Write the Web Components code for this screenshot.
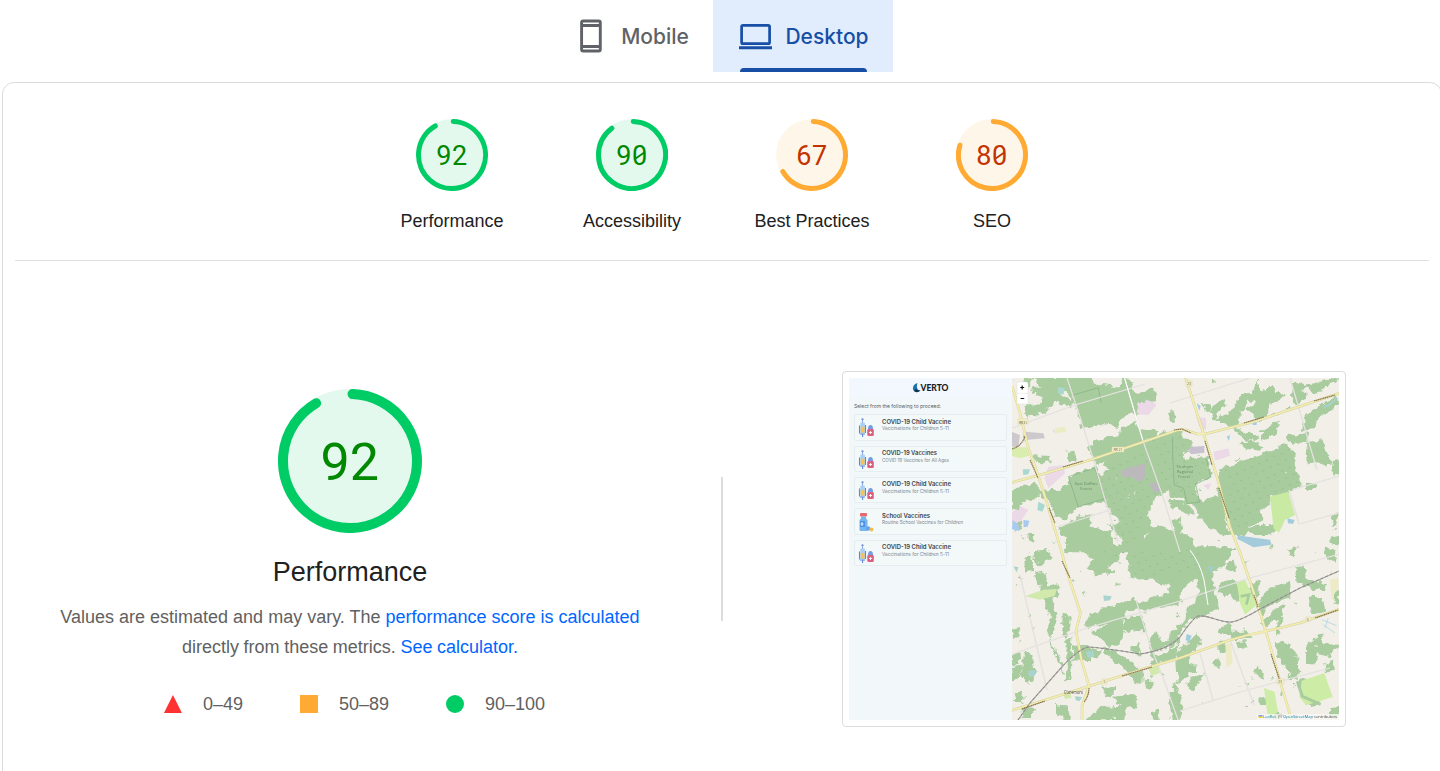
<!DOCTYPE html>
<html lang="en">
<head>
<meta charset="utf-8">
<title>PageSpeed report</title>
<style>
html,body{margin:0;height:100%;overflow:hidden;background:#fff;font-family:"Liberation Sans",Arial,sans-serif}
</style>
</head>
<body>
<report-page></report-page>
<script>
const define = (name, html, setup) => customElements.define(name, class extends HTMLElement {
  connectedCallback() {
    if (this.shadowRoot) return;
    const root = this.attachShadow({mode: 'open'});
    const t = document.createElement('template');
    t.innerHTML = typeof html === 'function' ? html(this) : html;
    root.append(t.content.cloneNode(true));
    if (setup) setup(this, root);
  }
});

define('device-tab', `<style>
:host{display:flex;box-sizing:border-box;height:72px;align-items:center;justify-content:center;position:relative;color:#5f6368;font:500 21px/28px Inter,"Open Sans",sans-serif}
:host([active]){background:#e1edfc;color:#174ea6}
:host([active])::after{content:"";position:absolute;left:27px;right:26px;bottom:0;height:4px;border-radius:4px 4px 0 0;background:#174ea6}
.icon{display:flex;width:36px;height:36px;margin-right:12px}
.label{white-space:nowrap;padding-top:1px}
</style><span class="icon"><slot name="icon"></slot></span><span class="label"><slot></slot></span>`);

// Circular score gauge; angles run clockwise from twelve o'clock.
define('score-gauge', el => {
  const size = +el.getAttribute('size'), sw = +el.getAttribute('stroke'), end = +el.getAttribute('end');
  const c = size / 2, r = c - sw / 2, start = sw / 2 / r * 180 / Math.PI * .5;
  const pt = a => { a = a * Math.PI / 180; return (c + r * Math.sin(a)).toFixed(2) + ' ' + (c - r * Math.cos(a)).toFixed(2); };
  const pass = el.hasAttribute('pass');
  const [bg, line, ink] = pass ? ['#e4f9ee', '#0c6', '#080'] : ['#fff6ea', '#fa3', '#c33300'];
  const fs = +el.getAttribute('font'), score = el.getAttribute('score');
  const small = size < 100;
  const pitch = small ? 15.9 : 29.2, y = c + fs * .357 + (small ? .5 : 0);
  const slash = score[1] === '0' ? `<path d="M${c + pitch / 2 - 4.3} ${c + 3.6}L${c + pitch / 2 + 4.3} ${c - 2.6}" stroke="${ink}" stroke-width="1.8"/>` : '';
  return `<style>:host{display:block;width:${size}px;height:${size}px}svg{display:block}text{font-family:Roboto,sans-serif;font-size:${fs}px;text-anchor:middle}</style>
  <svg width="${size}" height="${size}" viewBox="0 0 ${size} ${size}">
  <circle cx="${c}" cy="${c}" r="${c}" fill="${bg}"/>
  <path d="M${pt(start)}A${r} ${r} 0 1 1 ${pt(end)}" fill="none" stroke="${line}" stroke-width="${sw}" stroke-linecap="round"/>
  <text x="${c - pitch / 2 - .3}" y="${y}" fill="${ink}">${score[0]}</text><text x="${c + pitch / 2 - .3}" y="${y}" fill="${ink}">${score[1]}</text>${slash}</svg>`;
});

define('category-score', el => `<style>
:host{display:flex;flex-direction:column;align-items:center;width:180px;color:#212121;font-size:18px;line-height:24px}
span{margin-top:18px}
</style><score-gauge size="72" stroke="5" font="27" score="${el.getAttribute('score')}" end="${el.getAttribute('end')}" ${el.hasAttribute('pass') ? 'pass' : ''}></score-gauge><span><slot></slot></span>`);

define('legend-item', `<style>
:host{display:flex;align-items:center;gap:21px;color:#616161;font-size:18px;line-height:24px}
i{display:block;width:18px;height:18px}
:host([kind=fail]) i{background:#f33;clip-path:polygon(50% 0,100% 100%,0 100%)}
:host([kind=average]) i{background:#fa3}
:host([kind=pass]) i{background:#0c6;border-radius:50%}
</style><i></i><span><slot></slot></span>`);

define('fit-text', el => {
  const w = el.getAttribute('w'), f = +el.getAttribute('size');
  return `<style>:host{display:block;height:${f * 1.25}px}svg{display:block;overflow:visible}text{font-family:Inter,sans-serif;font-weight:${el.getAttribute('weight') || 400};font-size:${f}px;fill:${el.getAttribute('ink')}}</style>
  <svg width="${w}" height="${f * 1.25}"><text x="0" y="${f}" textLength="${w}" lengthAdjust="spacingAndGlyphs">${el.getAttribute('text')}</text></svg>`;
});

define('vaccine-icon', el => `<style>:host{display:block;width:17px;height:20px}svg{display:block}</style>` + (el.getAttribute('kind') === 'bottle'
 ? `<svg width="17" height="20" viewBox="0 0 17 20"><rect x="2" y="1" width="7" height="3.5" rx="1" fill="#e6676c"/><path d="M3 4.500h5v2l1.500 1.500v10q0 1-1 1h-6q-1 0-1-1v-10L3 6.500z" fill="#77b5ee"/><rect x="2" y="9" width="5" height="6" fill="#4d91e3"/><path d="M4 10v4M2.500 12h3" stroke="#e4f3fd"/><circle cx="10" cy="16.500" r="2.300" fill="#61a6ef"/><circle cx="13.500" cy="17.500" r="2" fill="#f1bd56"/></svg>`
 : `<svg width="17" height="20" viewBox="0 0 17 20"><path d="M4.500 0v5M3 1.300h3" stroke="#7f98d8" stroke-width=".9"/><rect x="2.300" y="4.500" width="4.600" height="11" rx="1" fill="#a9cff3"/><rect x="2.800" y="9" width="3.700" height="5.500" fill="#f6c253"/><path d="M1.500 7.500v8M7.500 7v8M2 16h5M4.600 16v3" stroke="#5f88da" stroke-width="1.100"/><path d="M10 11q0-4 2.500-4T15 11z" fill="#759be3"/><rect x="9.300" y="11" width="6.500" height="7" rx="1.300" fill="#dc607f"/><path d="M12.500 13v3M11 14.500h3" stroke="#fff" stroke-width=".9"/></svg>`));

define('vaccine-card', el => `<style>
:host{display:flex;box-sizing:border-box;height:26.4px;border:1px solid #e6edf0;border-radius:2px;background:#f3f8f9;padding:3px 0 0 3px;gap:7px}
fit-text:first-child{margin-top:-.7px}
fit-text+fit-text{margin-top:.3px}
</style><vaccine-icon kind="${el.getAttribute('icon')}"></vaccine-icon><div>
<fit-text text="${el.getAttribute('name')}" w="${el.getAttribute('nw')}" size="5.900" weight="600" ink="#3b444b"></fit-text>
<fit-text text="${el.getAttribute('note')}" w="${el.getAttribute('tw')}" size="4.600" ink="#7b858b"></fit-text></div>`);

// Region map. The four land groups share a scale of three units per pixel.
define('region-map', () => {
  const q = (x, y, s) => `<g transform="translate(${x} ${y}) scale(.33333)">${s}</g>`;
  const poly = list => list.trim().split('\n').map(p => `<polygon points="${p.trim()}"/>`).join('');
  const nw = poly(`75,24 165,22 160,50 145,75 190,90 188,112 135,95 105,128 50,138 45,110 88,102 98,80 60,60 98,50
  165,22 240,22 250,42 330,55 340,22 352,22 380,75 425,58 442,68 438,92 385,95 378,130 350,128 330,150 325,168 280,160 215,172 203,120 188,78 160,62
  40,24 58,24 62,45 48,48
  245,222 285,202 328,198 332,178 375,155 382,180 440,182 440,200 340,220 300,238 246,255 236,232
  248,250 330,222 400,205 420,245 430,300 465,365 430,388 412,430 425,475 400,495 400,545 332,545 335,505 305,470 335,450 308,435 290,400 260,318 300,300 285,275 262,288
  175,320 255,292 290,388 205,410
  410,215 490,188 512,180 512,362 462,362 442,330 425,285
  90,362 140,358 180,345 205,410 160,448 140,440 125,395 100,385
  5,360 80,340 92,368 70,390 35,390 30,412 5,415
  145,475 205,445 242,435 235,470 270,478 298,490 310,525 335,545 165,545 170,510
  418,475 450,472 500,490 490,455 512,440 512,545 390,545 405,510
  175,248 192,244 198,270 178,272
  78,258 118,260 120,275 84,280
  55,492 74,496 70,512 54,508
  440,200 465,182 476,202 510,185 510,210 448,220
  18,480 35,470 30,455 12,460`);
  const ne = poly(`0,190 28,192 40,208 60,214 68,230 40,245 45,272 110,262 125,320 82,335 76,350 92,395 70,405 50,400 40,382 0,375
  150,298 310,245 345,222 372,248 390,348 345,368 298,378 300,402 265,420 280,450 240,468 220,496 188,492 170,440 145,370
  75,400 150,380 165,450 180,492 150,495 130,475 90,445
  0,385 45,400 72,428 55,438 40,420 0,412
  0,480 60,500 75,545 0,545
  125,125 132,102 162,88 165,110 130,130 140,152 198,112 210,75 262,68 268,84 232,92 225,118 210,120 200,165 180,172 160,150 132,152
  238,80 265,35 270,75 300,85 290,140 268,158 235,115 260,100
  270,65 308,48 316,68 310,82 280,92
  290,85 328,70 340,80 305,96
  368,42 398,40 395,62 408,72 400,92 378,100 365,78
  392,48 440,40 430,54
  425,58 455,32 490,24 505,30 470,44 450,62 430,70
  405,145 425,120 475,98 500,82 502,98 470,130 438,148 435,175 398,180
  0,120 15,132 12,150 0,150
  195,175 225,192 252,188 265,205 225,210
  210,220 250,215 278,228 268,240 230,235
  275,185 330,150 320,185 295,205 275,212
  410,220 455,208 468,250 485,268 482,290 445,275 415,280
  490,272 506,270 506,310 488,318
  408,340 435,342 435,352 410,352
  100,110 120,102 122,120 105,122
  170,370 235,355 235,380 190,400
  482,505 506,500 506,526 486,526
  230,475 285,465 330,475 300,490 240,490
  350,200 415,190 410,210 368,225
  485,434 500,430 500,460 490,462`);
  const sw = poly(`75,12 112,5 120,30 88,52 72,34
  45,35 62,25 68,70 48,75
  220,0 350,0 365,90 420,88 455,112 510,92 510,0
  220,0 330,0 325,38 290,60 310,70 260,82 232,60 250,38
  90,120 140,108 146,132 125,160 138,200 122,270 112,245 125,205
  75,80 102,76 110,115 85,112
  160,200 172,198 180,230 168,270 158,235
  228,230 238,205 290,182 370,155 400,175 345,188 345,210 230,240
  250,250 328,212 342,240 330,288 300,295 270,270
  340,210 392,205 410,248 345,245
  375,172 425,150 510,130 510,165 400,188
  195,298 225,295 270,310 262,328 235,338 192,335
  275,305 295,300 360,340 400,380 398,402 375,400 340,358
  5,325 30,315 32,335 10,350
  35,355 52,310 68,330 75,375 58,405 38,388
  5,360 30,352 32,385 8,395
  422,275 435,255 458,285 490,270 506,245 508,280 435,310 445,350 425,345
  362,298 388,290 392,320 368,318
  280,422 310,416 310,435 288,440
  230,515 270,480 335,475 310,445 372,440 385,470 350,480 340,515
  405,402 425,400 425,420 410,422
  10,435 40,428 38,460 15,460
  35,480 70,485 65,508 40,508
  140,470 170,475 180,515 140,500
  8,245 25,240 28,265 12,268
  430,325 470,315 505,290 495,330 435,345
  175,350 165,290 185,270 185,350 170,402
  120,280 150,330 160,380 150,345
  425,495 445,490 450,512 430,512
  485,415 500,410 495,440`);
  const se = poly(`0,0 195,0 160,48 130,68 125,100 85,90 60,100 35,120 20,165 0,170
  85,80 128,100 145,180 90,205 55,215 0,300 0,255 40,225 60,170 88,150
  150,105 190,95 208,120 205,155 170,140 148,135
  172,42 195,38 195,72 172,65
  355,5 382,0 370,22
  465,0 490,10 495,42 475,30
  380,60 402,55 405,90 465,110 460,130 385,105
  240,105 268,98 262,145 250,155
  295,125 355,105 360,145 300,170 270,205 260,175
  415,148 455,150 465,190 425,198
  495,128 505,125 505,168 492,165
  275,225 320,180 342,172 328,240 320,265 322,210 285,240
  320,280 345,285 380,318 385,390 365,388 325,320
  410,298 455,260 458,290 505,292 480,325 440,315 435,345 410,340
  465,348 490,338 492,362 470,375
  480,482 505,480 500,510 478,505
  20,320 80,260 92,285 65,315 50,390 25,405
  60,395 105,378 85,400 72,425 55,420
  145,240 180,228 182,250 225,250 250,270 195,275 180,258 150,260
  145,285 162,280 165,305 148,310
  132,345 150,330 150,360 135,360
  200,285 225,282 230,300 205,302
  260,360 282,375 280,395 262,385
  270,450 290,455 285,470 272,468
  0,435 20,430 40,470 30,510 10,515
  60,345 72,350 70,372 55,370
  380,405 400,390 420,450 450,460 425,475 395,440
  305,495 325,490 328,512 310,512`);
  let seed = 7;
  const rnd = () => (seed = seed * 16807 % 2147483647) / 2147483647;
  let specks = '', holes = '';
  for (let i = 0; i < 150; i++) {
    const x = 1012 + rnd() * 327, y = 378 + rnd() * 342, w = .8 + rnd() * 2.6, h = .7 + rnd() * 2;
    const s = `<rect x="${x.toFixed(1)}" y="${y.toFixed(1)}" width="${w.toFixed(1)}" height="${h.toFixed(1)}" transform="rotate(${(rnd() * 70 - 35) | 0} ${x | 0} ${y | 0})"/>`;
    if (i % 3) specks += s; else holes += s;
  }
  const major = ['1012 386 1020 413 1028 447 1038 475 1047 503 1061 550 1069 578 1080.5 613 1076 631 1081.7 661 1089 686 1082 706 1082 720',
   '1010 483 1040 475 1090 460 1143 442 1178 430 1186 430 1197 434 1205 434 1253 422 1313 402 1340 393',
   '1185 376 1203 432 1217 477 1230 527 1239 550 1250 581 1267 635 1280 681 1292 721',
   '1010 711 1077 690 1140 670 1180 658 1230 640 1248 635 1267 631 1300 623 1340 609'];
  const lines = (a, c, w) => a.map(p => `<polyline points="${p}" stroke="${c}" stroke-width="${w}"/>`).join('');
  const minor = ['1010 655 1087 628 1180 601 1250 578 1340 554', '1067 378 1080 417 1093 458 1106 503 1118 542', '1124 376 1143 441 1163 497 1180 552',
   '1136 600 1150 645 1164 680 1178 720', '1012 428 1075 405 1145 384', '1057 527 1110 510', '1020 575 1047 690', '1170 403 1250 378',
   '1289 490 1299 524 1339 513', '1200 653 1213 700', '1180 711 1240 692 1330 668', '1290 378 1317 470', '1339 476 1292 490', '1230 640 1254 705'];
  const rail = 'M1018 720L1030 703 1060 669Q1077 650 1088 647Q1105 648 1140 654Q1168 650 1180 637Q1193 618 1198 616C1210 615 1220 623 1232 622Q1242 620 1260 609L1300 588 1339 571';
  return `<style>:host{display:block;width:327px;height:342px;overflow:hidden}svg{display:block}text{font-family:"Open Sans",sans-serif}</style>
  <svg width="327" height="342" viewBox="1012 378 327 342">
  <defs><pattern id="tree" width="12" height="11" patternUnits="userSpaceOnUse" patternTransform="rotate(18)"><path d="M2 3l1-1 1 1M8 8l1-1 1 1" stroke="#93bd8b" stroke-width=".9" fill="none"/></pattern>
  <filter id="rough" x="1000" y="370" width="350" height="360" filterUnits="userSpaceOnUse" color-interpolation-filters="sRGB"><feTurbulence type="fractalNoise" baseFrequency=".16" numOctaves="2" seed="4"/><feDisplacementMap in="SourceGraphic" scale="8" xChannelSelector="R" yChannelSelector="G"/></filter>
  <filter id="soft" x="1000" y="370" width="350" height="360" filterUnits="userSpaceOnUse" color-interpolation-filters="sRGB"><feGaussianBlur stdDeviation=".5"/></filter></defs>
  <rect x="1012" y="378" width="327" height="342" fill="#f2efe9"/>
  <g filter="url(#soft)">
  ${q(1010, 370, '<path fill="#ecd9e8" d="M375 95l40-12 25 22-25 30-38-2zM115 290l45-5 5 25-50 45-12-30zM5 430l20-25 30 15-30 45-20-5z"/><path fill="#d9edaf" d="M5 232h45l8 25-30 8-23-8z"/><path fill="#e9edc5" d="M135 175l30-5 5 15-35 5z"/><path fill="#ccc8cc" d="M5 185l25 10-5 35H5zM45 185l55 5 5 15-60 5z"/>')}
  ${q(1170, 370, '<path fill="#ecd9e8" d="M130 245l45-10 5 22-45 15zM100 345l25-5-10 20zM78 140l30 5v35l-20-10z"/><path fill="#c8c1cf" d="M48 232l55-4v20l-40 5z"/>')}
  ${q(1170, 548, '<path fill="#edebc6" d="M165 290l18-5 5 60-18 15zM480 95l25-5v65h-20z"/>')}
  <g filter="url(#rough)"><g fill="#a9cc9f"><g stroke="#a9cc9f" stroke-width="4">${q(1010, 370, nw)}${q(1170, 370, ne)}${q(1010, 548, sw)}${q(1170, 548, se)}</g>${specks}</g><g fill="#f0eee6">${holes}</g></g>
  <g fill="url(#tree)"><path d="M1098 468l45-20 18 45-18 30-8 25h-22l-10-40zM1150 440l30-8 25 30-5 40-30 5zM1225 470l65-22 9 38-30 12-25 35-15-15zM1100 550h75l30 0-5 20-60 8z"/></g>
  ${q(1010, 370, '<path fill="#bcb9bd" d="M335 300l70-20 2 45-22 10-15-12-38-5zM415 342l25-5 12 25-15 8z"/><path d="M190 75l75-22 8 45M175 320l80-26 30 92-80 24z" fill="none" stroke="#80b080" stroke-width="2"/><path fill="#a8d8ce" d="M145 52l20 2-5 20-17-5zM38 298h22l-5 15-15 2zM85 395l20 10-8 20-15-5z"/><path fill="#a8c9f0" d="M8 450l18 15 2 18-22-5zM40 450l18 2-5 18-12 2z"/>')}
  ${q(1170, 370, '<path fill="#c9eaa3" d="M300 380l55-15 20 70-30 15-18 38-16-12z"/><path fill="#a3cbdc" d="M203 496l55 8 42 5 5 15-55 8-28-15-20-10zM352 445l22 5-5 12-15-2zM80 100l12 8-4 14z"/><path d="M8 200v60l5 85 28 10 10 45 38-3-12-55 45-20-14-60" fill="none" stroke="#7eb183" stroke-width="2"/><path d="M500 82q-15 22-38 30" stroke="#a7d2d5" stroke-width="5" fill="none"/><path fill="#a1ccec" d="M248 153h12v12h-12zM170 200l10-5-3 18z"/>')}
  ${q(1010, 548, '<path fill="#d1e9ad" d="M45 145l55-20 40-2-5 20-45 12zM415 360l30-8 5 22-25 10zM160 440l20-5 5 15-20 3z"/><path fill="#a9d3ce" d="M55 370l20-5v18l-18 4zM280 142l25 3-5 12-18 2zM228 312l22-5 3 18-20 5zM195 445l22 2-8 12-12-2zM10 55l15 3-5 15z"/>')}
  ${q(1170, 548, '<path fill="#cdeca5" d="M200 102l25-7 35 75-35 30-15-35zM395 398l68-23 25 72-80 25-20-25zM282 420l32 12 10 60-30 20z"/><path d="M212 145l25-5-8 30" fill="none" stroke="#a9cc9f" stroke-width="8"/><path d="M382 400l15 45 55 24" stroke="#a9cc9f" stroke-width="9" fill="none"/><path fill="#9fcde0" d="M50 258l15 5-8 20-10-8zM115 55l15 3-8 17z"/><path d="M455 215l45 18M460 230l35 25M475 210l-10 30" stroke="#b9dce3" stroke-width="3"/>')}
  <g fill="none" stroke-linejoin="round">${lines(minor, '#d9d6d5', 1.2)}${lines(minor, '#f3f0ed', .5)}
  <path d="M1124 376l19 65M1190 550q10 13 14 30l4 25" stroke="#fff" stroke-width="1"/>
  ${lines(major, '#d3cf9f', 2.6)}${lines(major, '#f3eeb0', 1.8)}
  <path d="${rail}" stroke="#aaa8a6" stroke-width="1.200"/><path d="${rail}" stroke="#858382" stroke-width=".9" stroke-dasharray="3 2"/>
  <path d="M1012 449q10-3 13-13M1174 430l8-1 9 4M1089 688q0 8-5 14M1063 467l20-6M1205 441l7 24M1219 488l10 30M1030 460l8 18M1049 508l6 15M1062 561l8 17M1254 595l4 12M1271 654l9 27M1022 709l23-8M1122 676l30-9M1244 423l20-6M1314 401l21-6M1315 618l23-8" stroke="#82704c" stroke-width="1.100" stroke-dasharray="1.500 .4"/></g>
  <g fill="#f5f0c8" stroke="#d9d4a9" stroke-width=".5"><rect x="1018" y="419" width="10" height="5"/><rect x="1112" y="447" width="12" height="5"/><rect x="1186" y="381" width="6" height="5"/><rect x="1102" y="679" width="5" height="5"/><rect x="1277" y="679" width="7" height="5"/><rect x="1306" y="617" width="5" height="4"/></g>
  <g font-size="3.700" fill="#786f58"><text x="1019" y="423.500" textLength="8">RR 31</text><text x="1113.500" y="451.300" textLength="9">RR 21</text><text x="1187" y="385.300">23</text><text x="1103.400" y="683.200">5</text><text x="1278" y="683.200">23</text><text x="1307" y="620.500">5</text></g>
  <g font-size="4" fill="#628b62" text-anchor="middle"><text x="1185" y="468">Durham</text><text x="1185" y="473">Regional</text><text x="1184" y="478">Forest</text><text x="1086" y="485">East Duffins</text><text x="1086" y="490">Forest</text></g>
  <text x="1064" y="693.500" font-size="4.800" textLength="19" lengthAdjust="spacingAndGlyphs" fill="#444">Claremont</text>
  </g>
  <rect x="1017" y="382" width="11" height="22" rx="1.500" fill="#fff" stroke="#ddd" stroke-width=".5"/><path d="M1017 393.300h11" stroke="#ddd" stroke-width=".5"/><path d="M1020.200 387.500h4M1022.200 385.500v4M1020.500 398.500h3.700" stroke="#111" stroke-width="1.200"/>
  <rect x="1257" y="714" width="82" height="6" fill="#f8f7f4" opacity=".8"/>
  <path d="M1258.500 715.300h4v1.300h-4z" fill="#4c7be1"/><path d="M1258.500 716.600h4v1.400h-4z" fill="#ffd500"/>
  <g font-size="4"><text x="1263" y="718.200" textLength="13" fill="#0078a8">Leaflet</text><text x="1277.300" y="718.200" textLength="5" fill="#444">| ©</text><text x="1283" y="718.200" textLength="30" fill="#0078a8">OpenStreetMap</text><text x="1314" y="718.200" textLength="23" fill="#444">contributors</text></g>
  </svg>`;
});

define('site-preview', `<style>
:host{display:flex;box-sizing:border-box;width:504px;height:356px;padding:6px;border:1px solid #dadce0;border-radius:4px;background:#fff}
aside{width:163px;height:342px;background:#f2f8f9}
header{height:20px;background:#f3f8fe;display:flex;justify-content:center}
.prompt{padding:4.700px 0 0 5px;height:10.800px}
.cards{display:flex;flex-direction:column;gap:4.900px;padding:0 5px;margin-top:1px}
svg{display:block}
</style><aside><header><svg width="38" height="20" viewBox="0 0 38 20"><path d="M5.500 5C1.500 6-.5 10.200 2 13Q4.500 15.500 8.500 12.500Q5.500 12.500 5 9.500Q4.700 7 5.500 5z" fill="#1875ae"/><path d="M2 13q3 2.500 6.500-.5-4 .5-4.500-2z" fill="#16304c"/><text x="8.500" y="13" textLength="28" lengthAdjust="spacingAndGlyphs" font-family="Lato,sans-serif" font-weight="900" font-size="8.500" fill="#182027">VERTO</text></svg></header>
<div class="prompt"><fit-text text="Select from the following to proceed:" w="87" size="4.900" ink="#535c62"></fit-text></div>
<div class="cards">
<vaccine-card name="COVID-19 Child Vaccine" nw="69" note="Vaccinations for Children 5-11" tw="67"></vaccine-card>
<vaccine-card name="COVID-19 Vaccines" nw="55" note="COVID 19 Vaccines for All Ages" tw="67"></vaccine-card>
<vaccine-card name="COVID-19 Child Vaccine" nw="69" note="Vaccinations for Children 5-11" tw="67"></vaccine-card>
<vaccine-card icon="bottle" name="School Vaccines" nw="48" note="Routine School Vaccines for Children" tw="81"></vaccine-card>
<vaccine-card name="COVID-19 Child Vaccine" nw="69" note="Vaccinations for Children 5-11" tw="67"></vaccine-card>
</div></aside><region-map></region-map>`);

define('report-page', `<style>
:host{display:block;width:1440px;height:771px;overflow:hidden}
nav{display:flex;height:72px;padding-left:549px}
device-tab:first-child{width:164px}device-tab:last-child{width:180px}
main{box-sizing:border-box;width:1440px;height:760px;margin:10px 0 0 2px;border:1px solid #dadce0;border-radius:12px;padding:0 12px}
.scores{display:flex;justify-content:center;box-sizing:border-box;height:178px;padding-top:36px;border-bottom:1px solid #e0e0e0}
.detail{display:grid;grid-template-columns:694px 1px 1fr;padding-top:110px}
.left{display:flex;flex-direction:column;align-items:center;width:670px;padding-top:18px}
h2{margin:21px 0 0;font-weight:400;font-size:27px;line-height:36px;color:#212121}
p{margin:12px 0 0;width:620px;text-align:center;font-size:18px;line-height:30px;color:#616161}
a{color:#06f;text-decoration:none}
.tight{word-spacing:-.4px}
.legend{display:flex;gap:57px;margin:30px 0 0 9px}
.rule{height:144px;width:2px;margin:106px 0 0 12px;background:#dcdcdc}
site-preview{margin:0 0 0 132px}
svg{display:block}
</style>
<nav><device-tab><svg slot="icon" width="36" height="36" viewBox="0 0 36 36"><path fill="none" stroke="currentColor" stroke-width="2.900" d="M10.200 3h15.500q1.600 0 1.600 1.600v26.800q0 1.600-1.600 1.600H10.200q-1.600 0-1.600-1.600V4.600Q8.600 3 10.200 3zM8.600 7.500h18.700M8.600 28.500h18.700"/></svg>Mobile</device-tab>
<device-tab active><svg slot="icon" width="36" height="36" viewBox="0 0 36 36"><rect x="4.600" y="7.300" width="28" height="18.400" rx="1.500" fill="none" stroke="currentColor" stroke-width="2.700"/><path d="M2 28.300h33v3H2z" fill="currentColor"/></svg>Desktop</device-tab></nav>
<main><section class="scores">
<category-score pass score="92" end="330">Performance</category-score>
<category-score pass score="90" end="323">Accessibility</category-score>
<category-score score="67" end="240.500">Best Practices</category-score>
<category-score score="80" end="287">SEO</category-score></section>
<section class="detail"><div class="left"><score-gauge pass size="144" stroke="10" font="52" score="92" end="329.600"></score-gauge>
<h2>Performance</h2>
<p>Values are estimated and may vary. The <a>performance score is calculated</a><br><span class="tight">directly from these metrics. <a>See calculator.</a></span></p>
<div class="legend"><legend-item kind="fail">0–49</legend-item><legend-item kind="average">50–89</legend-item><legend-item kind="pass">90–100</legend-item></div></div>
<div class="rule"></div><site-preview></site-preview></section></main>`);
</script>
</body>
</html>
